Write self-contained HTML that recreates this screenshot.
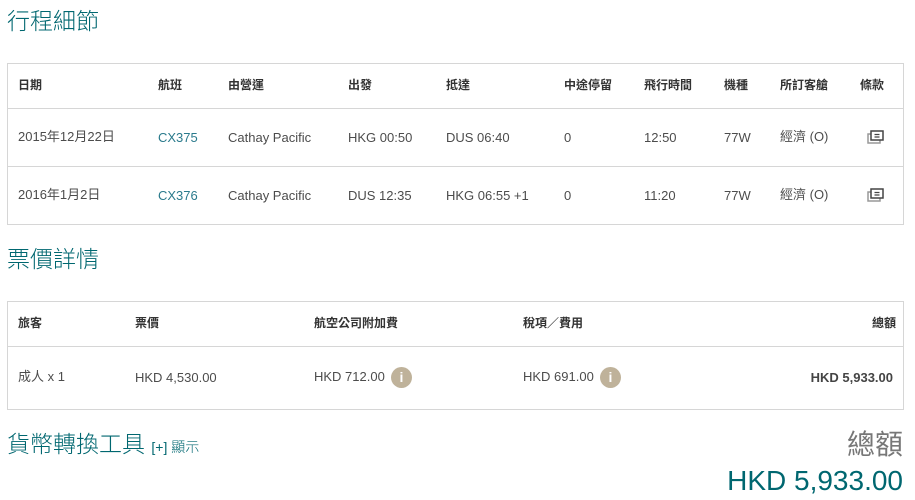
<!DOCTYPE html>
<html><head><meta charset="utf-8"><style>
body{margin:0;width:915px;height:500px;background:#fff;position:relative;overflow:hidden;font-family:"Liberation Sans","Noto Sans CJK TC",sans-serif;color:#4c4c4c;font-size:13px}
.a{position:absolute;white-space:nowrap;line-height:1}
.h{font-weight:bold;color:#333;font-size:12px}
.t{color:#006770;font-weight:300}
.box{position:absolute;border:1px solid #d6d6d6;box-sizing:border-box}
.ln{position:absolute;height:1px;background:#d6d6d6}
.i{position:absolute;width:21px;height:21px;border-radius:50%;background:#bfb29a;color:#fff;font-weight:bold;font-size:14px;text-align:center;line-height:21px}
.doc{position:absolute;width:18px;height:15px}
</style></head><body>
<div class="a t" style="left:7px;top:10px;font-size:23px">行程細節</div>
<div class="box" style="left:7px;top:63px;width:897px;height:162px"></div>
<div class="ln" style="left:7px;top:108px;width:897px"></div>
<div class="ln" style="left:7px;top:166px;width:897px"></div>
<div class="a h" style="left:18px;top:79px">日期</div>
<div class="a h" style="left:158px;top:79px">航班</div>
<div class="a h" style="left:228px;top:79px">由營運</div>
<div class="a h" style="left:348px;top:79px">出發</div>
<div class="a h" style="left:446px;top:79px">抵達</div>
<div class="a h" style="left:564px;top:79px">中途停留</div>
<div class="a h" style="left:644px;top:79px">飛行時間</div>
<div class="a h" style="left:724px;top:79px">機種</div>
<div class="a h" style="left:780px;top:79px">所訂客艙</div>
<div class="a h" style="left:860px;top:79px">條款</div>

<div class="a" style="left:18px;top:130px">2015年12月22日</div>
<div class="a" style="left:158px;top:131px;color:#2a7a8c">CX375</div>
<div class="a" style="left:228px;top:131px">Cathay Pacific</div>
<div class="a" style="left:348px;top:131px">HKG 00:50</div>
<div class="a" style="left:446px;top:131px">DUS 06:40</div>
<div class="a" style="left:564px;top:131px">0</div>
<div class="a" style="left:644px;top:131px">12:50</div>
<div class="a" style="left:724px;top:131px">77W</div>
<div class="a" style="left:780px;top:130px">經濟 (O)</div>

<div class="a" style="left:18px;top:188px">2016年1月2日</div>
<div class="a" style="left:158px;top:189px;color:#2a7a8c">CX376</div>
<div class="a" style="left:228px;top:189px">Cathay Pacific</div>
<div class="a" style="left:348px;top:189px">DUS 12:35</div>
<div class="a" style="left:446px;top:189px">HKG 06:55 +1</div>
<div class="a" style="left:564px;top:189px">0</div>
<div class="a" style="left:644px;top:189px">11:20</div>
<div class="a" style="left:724px;top:189px">77W</div>
<div class="a" style="left:780px;top:188px">經濟 (O)</div>

<svg class="doc" style="left:867px;top:130px" viewBox="0 0 18 15"><rect x="1" y="4" width="12" height="9" fill="#fff" stroke="#999" stroke-width="1.5"/><rect x="4" y="1" width="12" height="9" fill="#fff" stroke="#444" stroke-width="1.5"/><path d="M7.5 4.5h5M7.5 7h5" stroke="#444" stroke-width="1.2"/></svg>
<svg class="doc" style="left:867px;top:188px" viewBox="0 0 18 15"><rect x="1" y="4" width="12" height="9" fill="#fff" stroke="#999" stroke-width="1.5"/><rect x="4" y="1" width="12" height="9" fill="#fff" stroke="#444" stroke-width="1.5"/><path d="M7.5 4.5h5M7.5 7h5" stroke="#444" stroke-width="1.2"/></svg>

<div class="a t" style="left:7px;top:248px;font-size:23px">票價詳情</div>
<div class="box" style="left:7px;top:301px;width:897px;height:109px"></div>
<div class="ln" style="left:7px;top:346px;width:897px"></div>
<div class="a h" style="left:18px;top:317px">旅客</div>
<div class="a h" style="left:135px;top:317px">票價</div>
<div class="a h" style="left:314px;top:317px">航空公司附加費</div>
<div class="a h" style="left:523px;top:317px">稅項／費用</div>
<div class="a h" style="right:19px;top:317px">總額</div>
<div class="a" style="left:18px;top:370px">成人 x 1</div>
<div class="a" style="left:135px;top:371px">HKD 4,530.00</div>
<div class="a" style="left:314px;top:370px">HKD 712.00</div>
<div class="i" style="left:391px;top:367px">i</div>
<div class="a" style="left:523px;top:370px">HKD 691.00</div>
<div class="i" style="left:600px;top:367px">i</div>
<div class="a" style="right:22px;top:371px;font-weight:bold;color:#444;font-size:13px">HKD 5,933.00</div>

<div class="a t" style="left:7px;top:433px;font-size:23px">貨幣轉換工具 <span style="font-size:14px">[+] 顯示</span></div>
<div class="a" style="right:12px;top:431px;font-size:28px;color:#777">總額</div>
<div class="a" style="right:12px;top:467px;font-size:28px;color:#006770">HKD 5,933.00</div>
</body></html>
